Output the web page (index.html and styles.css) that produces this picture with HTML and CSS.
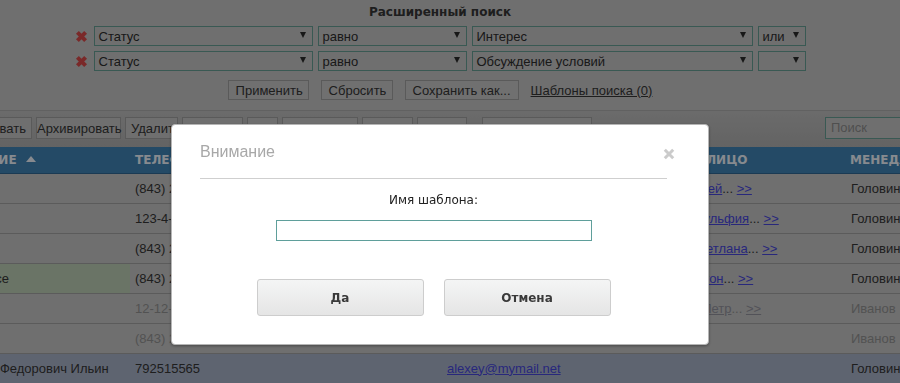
FILE: index.html
```html
<!DOCTYPE html>
<html lang="ru">
<head>
<meta charset="utf-8">
<title>Расширенный поиск</title>
<link rel="stylesheet" href="styles.css">
</head>
<body>
<div class="page">
  <section class="search">
    <h1 class="search-title">Расширенный поиск</h1>
    <div class="cond-row">
      <svg class="del" viewBox="0 0 13 13" width="13" height="13"><path d="M2.4 2.4 L10.6 10.6 M10.6 2.4 L2.4 10.6"/></svg>
      <div class="sel s1"><span class="sel-text">Статус</span><span class="arr"></span></div>
      <div class="sel s2"><span class="sel-text">равно</span><span class="arr"></span></div>
      <div class="sel s3"><span class="sel-text">Интерес</span><span class="arr"></span></div>
      <div class="sel s4"><span class="sel-text">или</span><span class="arr"></span></div>
    </div>
    <div class="cond-row">
      <svg class="del" viewBox="0 0 13 13" width="13" height="13"><path d="M2.4 2.4 L10.6 10.6 M10.6 2.4 L2.4 10.6"/></svg>
      <div class="sel s1"><span class="sel-text">Статус</span><span class="arr"></span></div>
      <div class="sel s2"><span class="sel-text">равно</span><span class="arr"></span></div>
      <div class="sel s3"><span class="sel-text">Обсуждение условий</span><span class="arr"></span></div>
      <div class="sel s4"><span class="sel-text"></span><span class="arr"></span></div>
    </div>
    <div class="actions">
      <button class="btn b-apply">Применить</button>
      <button class="btn b-reset">Сбросить</button>
      <button class="btn b-save">Сохранить как...</button>
      <a class="tpl-link" href="#">Шаблоны поиска (0)</a>
    </div>
  </section>

  <div class="toolbar">
    <div class="tb-group">
      <button class="tb t1">Копировать</button>
      <button class="tb t2">Архивировать</button>
      <button class="tb t3">Удалить</button>
      <button class="tb t4"></button>
      <button class="tb t5"></button>
      <button class="tb t6"></button>
      <button class="tb t7"></button>
      <button class="tb t8"></button>
      <button class="tb t9"></button>
    </div>
    <div class="search-box">Поиск</div>
  </div>

  <div class="grid-wrap">
    <table class="grid">
      <colgroup>
        <col class="c1"><col class="c2"><col class="c3"><col class="c4"><col class="c5">
      </colgroup>
      <thead>
        <tr>
          <th><span class="h1txt">НАЗВАНИЕ</span><span class="sort-up"></span></th>
          <th>ТЕЛЕФОН</th>
          <th>E-MAIL</th>
          <th><span class="h-contact">КОНТАКТНОЕ ЛИЦО</span></th>
          <th>МЕНЕДЖЕР</th>
        </tr>
      </thead>
      <tbody>
        <tr>
          <td>Андрей</td>
          <td>(843) 279-45-12</td>
          <td></td>
          <td><a href="#">Петров Андрей</a>... <a href="#">&gt;&gt;</a></td>
          <td>Головин</td>
        </tr>
        <tr>
          <td>Зульфия</td>
          <td>123-4-567</td>
          <td></td>
          <td><a href="#">Гиниятова Зульфия</a>... <a href="#">&gt;&gt;</a></td>
          <td>Головин</td>
        </tr>
        <tr>
          <td>Ольга</td>
          <td>(843) 233-11-08</td>
          <td></td>
          <td><a href="#">Гарипова Светлана</a>... <a href="#">&gt;&gt;</a></td>
          <td>Головин</td>
        </tr>
        <tr>
          <td class="hl">ООО Росе</td>
          <td>(843) 251-70-33</td>
          <td></td>
          <td><a href="#">Миронов Антон</a>... <a href="#">&gt;&gt;</a></td>
          <td>Головин</td>
        </tr>
        <tr class="muted">
          <td>Петр</td>
          <td>12-12-12</td>
          <td></td>
          <td><a href="#">Афанасьев Петр</a>... <a href="#">&gt;&gt;</a></td>
          <td>Иванов</td>
        </tr>
        <tr class="muted">
          <td>Олег</td>
          <td>(843) 212-55-90</td>
          <td></td>
          <td></td>
          <td>Иванов</td>
        </tr>
        <tr class="selected">
          <td>Алексей Федорович Ильин</td>
          <td>792515565</td>
          <td><a href="#">alexey@mymail.net</a></td>
          <td></td>
          <td>Головин</td>
        </tr>
      </tbody>
    </table>
  </div>
</div>

<div class="overlay"></div>

<div class="dialog">
  <div class="dlg-head">Внимание</div>
  <svg class="dlg-close" viewBox="0 0 12 12" width="12" height="12"><path d="M1.8 1.8 L10.2 10.2 M10.2 1.8 L1.8 10.2"/></svg>
  <div class="dlg-body">
    <div class="dlg-label">Имя шаблона:</div>
    <input class="dlg-input" type="text">
    <div class="dlg-buttons">
      <button class="dlg-btn">Да</button>
      <button class="dlg-btn">Отмена</button>
    </div>
  </div>
</div>
</body>
</html>
```

FILE: styles.css
```css
* { box-sizing: border-box; }

html, body {
  margin: 0;
  padding: 0;
  width: 900px;
  height: 383px;
  overflow: hidden;
}

body {
  background: #bfbfbf;
  font-family: "Liberation Sans", Arial, sans-serif;
  font-size: 13px;
  color: #343434;
}

.page {
  width: 900px;
  overflow: hidden;
}

/* ---------- search block ---------- */
.search {
  padding: 4px 20px 10px 0;
  display: flex;
  flex-direction: column;
  align-items: center;
}

.search-title {
  margin: 0;
  font-family: "DejaVu Sans", Verdana, sans-serif;
  font-size: 12px;
  font-weight: bold;
  line-height: 16px;
  color: #343434;
}

.cond-row {
  display: flex;
  align-items: center;
  height: 20px;
  margin-top: 5px;
  gap: 5px;
}
.search-title + .cond-row { margin-top: 6px; }

.del {
  width: 13px;
  height: 13px;
  margin-right: 1px;
  flex: none;
}
.del path {
  stroke: #d24848;
  stroke-width: 4;
  fill: none;
}

.sel {
  height: 20px;
  border: 1px solid #63998f;
  display: flex;
  align-items: center;
  padding: 0 6px 0 4px;
  flex: none;
  color: #2c2c2c;
}
.sel-text { flex: 1; white-space: nowrap; }
.s1 { width: 219px; }
.s2 { width: 149px; }
.s3 { width: 281px; }
.s4 { width: 48px; }

.arr {
  width: 0;
  height: 0;
  border-left: 3.5px solid transparent;
  border-right: 3.5px solid transparent;
  border-top: 6px solid #2a2a2a;
  flex: none;
  margin-top: -2px;
}

.actions {
  display: flex;
  align-items: center;
  gap: 12px;
  margin-top: 9px;
  height: 20px;
}

.btn {
  height: 20px;
  border: 1px solid #9b9b9b;
  background: #c1c1c1;
  font-family: "Liberation Sans", Arial, sans-serif;
  font-size: 13px;
  color: #343434;
  padding: 0 7px;
  margin: 0;
}
.b-apply { width: 81px; }
.b-reset { width: 72px; }
.b-save { width: 114px; }

.tpl-link {
  color: #343434;
  text-decoration: underline;
}

/* ---------- toolbar ---------- */
.toolbar {
  display: flex;
  align-items: center;
  height: 37px;
  border-top: 1px solid #a8a8a8;
  padding: 6px 0 8px;
  background: linear-gradient(#b9b9b9, #ababab);
}

.tb-group {
  display: flex;
  gap: 4px;
  margin-left: -59px;
}

.tb {
  height: 22px;
  border: 1px solid #9b9b9b;
  background: #c0c0c0;
  font-family: "Liberation Sans", Arial, sans-serif;
  font-size: 13px;
  color: #343434;
  padding: 0;
  margin: 0;
  flex: none;
  text-align: center;
}
.t1 { width: 91px; text-align: left; padding-left: 14px; }
.t2 { width: 85px; }
.t3 { width: 53px; text-align: left; padding-left: 5px; }
.t4 { width: 61px; }
.t5 { width: 31px; }
.t6 { width: 76px; }
.t7 { width: 51px; }
.t8 { width: 50px; }
.t9 { width: 110px; margin-left: 11px; }

.search-box {
  margin-left: auto;
  margin-right: -40px;
  width: 115px;
  height: 22px;
  border: 1px solid #63998f;
  background: #c0c0c0;
  color: #888;
  padding: 2px 0 0 5px;
  flex: none;
}

/* ---------- grid ---------- */
.grid-wrap {
  overflow: hidden;
}

.grid {
  border-collapse: collapse;
  table-layout: fixed;
  width: 1024px;
  margin-left: -59px;
}
.c1 { width: 189px; }
.c2 { width: 312px; }
.c3 { width: 183px; }
.c4 { width: 220px; }
.c5 { width: 120px; }

.grid th {
  height: 26px;
  background: #3e80b0;
  color: #e8eef6;
  font-family: "DejaVu Sans", Verdana, sans-serif;
  font-size: 12px;
  font-weight: bold;
  text-align: left;
  padding: 0 5px;
  white-space: nowrap;
  overflow: hidden;
  border-bottom: 1px solid #2f6590;
}
.grid th:first-child { padding-left: 0; }
.h-contact { margin-left: -22px; }
.h1txt { margin-left: 1px; }

.sort-up {
  display: inline-block;
  width: 0;
  height: 0;
  border-left: 5px solid transparent;
  border-right: 5px solid transparent;
  border-bottom: 6px solid #e8eef6;
  margin-left: 9px;
  vertical-align: 2px;
}

.grid td {
  height: 30px;
  padding: 0 5px;
  border-bottom: 1px solid #9d9d9d;
  white-space: nowrap;
  overflow: hidden;
  color: #343434;
}
.grid td:last-child { padding-left: 6px; }

.grid a { color: #4545d6; }

.grid td.hl { background: #b7c9b0; }

.grid tr.muted td { color: #8e8e8e; }
.grid tr.muted a { color: #8e8e98; }

.grid tr.selected td {
  background: #a3adc2;
  border-bottom: none;
}

/* ---------- modal ---------- */
.overlay {
  position: fixed;
  inset: 0;
  background: rgba(0, 0, 0, 0.42);
}

.dialog {
  position: fixed;
  left: 171px;
  top: 124px;
  width: 538px;
  height: 221px;
  background: #fff;
  border: 1px solid #b5b5b5;
  border-radius: 4px;
  box-shadow: 0 1px 3px rgba(0, 0, 0, 0.35);
  padding: 0 41px 0 28px;
}

.dlg-head {
  padding-top: 17px;
  padding-bottom: 16px;
  line-height: 20px;
  font-family: "Liberation Sans", Arial, sans-serif;
  font-size: 16px;
  color: #a8a8a8;
  border-bottom: 1px solid #cfcfcf;
}

.dlg-close {
  position: absolute;
  top: 23px;
  right: 33px;
}
.dlg-close path {
  stroke: #cbcbcb;
  stroke-width: 3;
  fill: none;
}

.dlg-body {
  display: flex;
  flex-direction: column;
  align-items: center;
}

.dlg-label {
  margin-top: 13px;
  line-height: 16px;
  font-family: "DejaVu Sans", Verdana, sans-serif;
  font-size: 12px;
  color: #222;
}

.dlg-input {
  margin: 12px 0 0;
  width: 316px;
  height: 21px;
  border: 1px solid #5f9f9b;
  outline: none;
  padding: 0 4px;
  background: #fff;
}

.dlg-buttons {
  display: flex;
  gap: 20px;
  margin-top: 38px;
}

.dlg-btn {
  width: 167px;
  height: 37px;
  margin: 0;
  border: 1px solid #cdcdcd;
  border-radius: 3px;
  background: linear-gradient(#f4f5f5, #e5e5e5);
  font-family: "DejaVu Sans", Verdana, sans-serif;
  font-size: 12px;
  font-weight: bold;
  color: #3a3a3a;
}
```
